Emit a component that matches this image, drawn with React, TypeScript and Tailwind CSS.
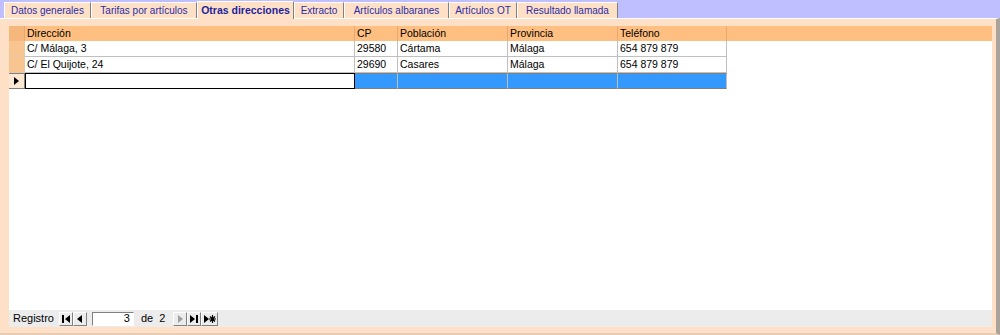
import React from "react";

const tabs = [
  { label: "Datos generales", w: "w-[87px]" },
  { label: "Tarifas por artículos", w: "w-[106px]" },
  { label: "Otras direcciones", w: "w-[97px]", active: true },
  { label: "Extracto", w: "w-[50px]" },
  { label: "Artículos albaranes", w: "w-[105px]" },
  { label: "Artículos OT", w: "w-[68px]" },
  { label: "Resultado llamada", w: "w-[101px]" },
];

const cols = [
  { label: "Dirección", w: "w-[330px]" },
  { label: "CP", w: "w-[43px]" },
  { label: "Población", w: "w-[110px]" },
  { label: "Provincia", w: "w-[110px]" },
  { label: "Teléfono", w: "w-[109px]" },
];

const rows = [
  ["C/ Málaga, 3", "29580", "Cártama", "Málaga", "654 879 879"],
  ["C/ El Quijote, 24", "29690", "Casares", "Málaga", "654 879 879"],
];

const NavBtn = ({ children, disabled, wide }: { children: React.ReactNode; disabled?: boolean; wide?: boolean }) => (
  <div
    className={`flex h-[14px] ${wide ? "w-[17px]" : "w-[14px]"} items-center justify-center border-t border-l border-white border-r border-b border-r-[#808080] border-b-[#808080] bg-[#ececec] text-[8px] leading-none ${
      disabled ? "text-[#a0a0a0]" : "text-black"
    }`}
  >
    {children}
  </div>
);

const App = () => {
  return (
    <div className="flex h-[335px] w-[1000px] flex-col bg-[#fde0c5] font-['Liberation_Sans',sans-serif] text-[10.5px] text-black">
      {/* tab strip */}
      <div className="flex h-[18px] items-end bg-[#bfbfff] pl-[4px] text-[10px]">
        {tabs.map((t) =>
          t.active ? (
            <div
              key={t.label}
              className={`${t.w} relative z-10 -mb-px flex h-[18px] items-center justify-center border-t border-l border-white border-r border-r-[#808080] bg-[#fde0c5] text-[10.5px] font-bold text-[#1f1f9c]`}
            >
              {t.label}
            </div>
          ) : (
            <div
              key={t.label}
              className={`${t.w} flex h-[16px] items-center justify-center border-t border-l border-white border-r border-r-[#808080] bg-[#fde0c5] text-[#2b2ba8]`}
            >
              {t.label}
            </div>
          )
        )}
      </div>

      {/* body */}
      <div className="flex flex-1 flex-col border-t border-white border-r-[4px] border-r-[#a9a39c] border-b-[2px] border-b-[#e8cdb4]">
        <div className="flex flex-1 flex-col pt-[7px] pl-[9px] pr-[4px] pb-[6px]">
          <div className="flex flex-1 flex-col bg-white">
            {/* header */}
            <div className="flex h-[15px] bg-[#ffbf80]">
              <div className="w-[16px] shrink-0 border-r border-[#e8a870] bg-[#f5b77c]" />
              {cols.map((c) => (
                <div
                  key={c.label}
                  className={`${c.w} shrink-0 border-r border-[#e8a870] pl-[2px] leading-[15px]`}
                >
                  {c.label}
                </div>
              ))}
            </div>
            {rows.map((r, i) => (
              <div key={i} className="flex h-[16px]">
                <div className="w-[16px] shrink-0 border-r border-b border-[#e8c8a8] bg-[#f8c590]" />
                {r.map((v, j) => (
                  <div
                    key={j}
                    className={`${cols[j].w} shrink-0 border-r border-b border-[#c0c0c0] pl-[2px] leading-[15px]`}
                  >
                    {v}
                  </div>
                ))}
              </div>
            ))}
            {/* new record row */}
            <div className="flex h-[16px]">
              <div className="flex w-[16px] shrink-0 items-center justify-center border-r border-t border-b border-[#808080] bg-[#fde8d4]">
                <svg width="5" height="8" viewBox="0 0 5 8">
                  <path d="M0 0 L5 4 L0 8 Z" fill="black" />
                </svg>
              </div>
              <div className={`${cols[0].w} shrink-0 border border-black bg-white`} />
              {cols.slice(1).map((c) => (
                <div
                  key={c.label}
                  className={`${c.w} shrink-0 border-r border-t border-b border-r-[#c0c0c0] border-t-[#808080] border-b-[#808080] bg-[#3399ff]`}
                />
              ))}
            </div>
            <div className="flex-1" />
            {/* record navigator */}
            <div className="flex h-[17px] items-center bg-[#ececec] pl-[4px] text-[11px]">
              <span className="mr-[3px]">Registro</span>
              <div className="ml-[2px] flex">
                <NavBtn>
                  <svg width="8" height="8" viewBox="0 0 8 8">
                    <rect x="0" y="0" width="2" height="8" fill="currentColor" />
                    <path d="M8 0 L3 4 L8 8 Z" fill="currentColor" />
                  </svg>
                </NavBtn>
                <NavBtn>
                  <svg width="5" height="8" viewBox="0 0 5 8">
                    <path d="M5 0 L0 4 L5 8 Z" fill="currentColor" />
                  </svg>
                </NavBtn>
              </div>
              <div className="ml-[5px] flex h-[14px] w-[42px] items-center justify-end border-t border-l border-[#808080] border-r border-b border-r-white border-b-white bg-white pr-[3px]">
                3
              </div>
              <span className="ml-[7px]">de</span>
              <span className="ml-[6px]">2</span>
              <div className="ml-[8px] flex">
                <NavBtn disabled>
                  <svg width="5" height="8" viewBox="0 0 5 8">
                    <path d="M0 0 L5 4 L0 8 Z" fill="currentColor" />
                  </svg>
                </NavBtn>
                <NavBtn>
                  <svg width="8" height="8" viewBox="0 0 8 8">
                    <path d="M0 0 L5 4 L0 8 Z" fill="currentColor" />
                    <rect x="6" y="0" width="2" height="8" fill="currentColor" />
                  </svg>
                </NavBtn>
                <NavBtn wide>
                  <svg width="12" height="8" viewBox="0 0 12 8">
                    <path d="M0 0 L5 4 L0 8 Z" fill="currentColor" />
                    <path d="M8.5 0 V8 M5 4 H12 M6 1.5 L11 6.5 M11 1.5 L6 6.5" stroke="currentColor" strokeWidth="1.2" />
                  </svg>
                </NavBtn>
              </div>
            </div>
          </div>
        </div>
      </div>
    </div>
  );
};

export default App;
